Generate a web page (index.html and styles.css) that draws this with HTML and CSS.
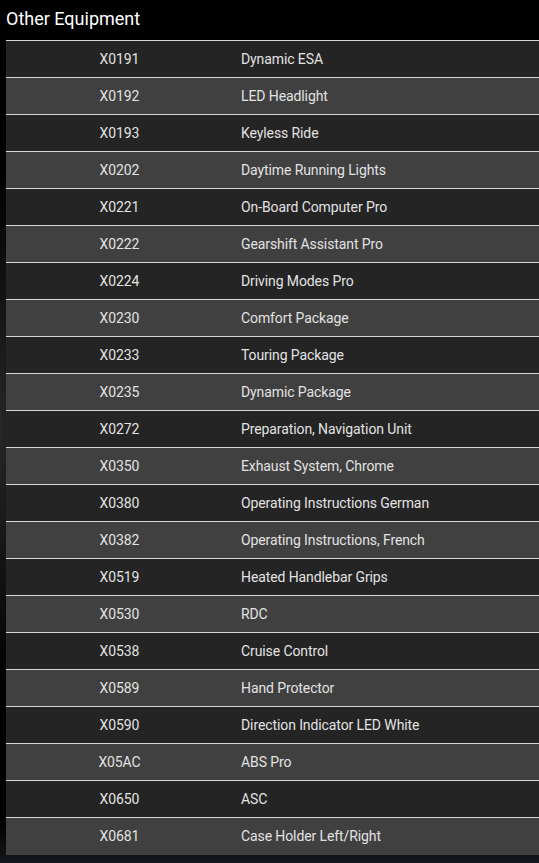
FILE: index.html
```html
<!DOCTYPE html>
<html>
<head>
<meta charset="utf-8">
<link rel="stylesheet" href="styles.css">
</head>
<body>
<div class="page">
  <h2 class="title">Other Equipment</h2>
  <table class="equip">
    <tbody>
      <tr><td class="code">X0191</td><td class="name">Dynamic ESA</td></tr>
      <tr><td class="code">X0192</td><td class="name">LED Headlight</td></tr>
      <tr><td class="code">X0193</td><td class="name">Keyless Ride</td></tr>
      <tr><td class="code">X0202</td><td class="name">Daytime Running Lights</td></tr>
      <tr><td class="code">X0221</td><td class="name">On-Board Computer Pro</td></tr>
      <tr><td class="code">X0222</td><td class="name">Gearshift Assistant Pro</td></tr>
      <tr><td class="code">X0224</td><td class="name">Driving Modes Pro</td></tr>
      <tr><td class="code">X0230</td><td class="name">Comfort Package</td></tr>
      <tr><td class="code">X0233</td><td class="name">Touring Package</td></tr>
      <tr><td class="code">X0235</td><td class="name">Dynamic Package</td></tr>
      <tr><td class="code">X0272</td><td class="name">Preparation, Navigation Unit</td></tr>
      <tr><td class="code">X0350</td><td class="name">Exhaust System, Chrome</td></tr>
      <tr><td class="code">X0380</td><td class="name">Operating Instructions German</td></tr>
      <tr><td class="code">X0382</td><td class="name">Operating Instructions, French</td></tr>
      <tr><td class="code">X0519</td><td class="name">Heated Handlebar Grips</td></tr>
      <tr><td class="code">X0530</td><td class="name">RDC</td></tr>
      <tr><td class="code">X0538</td><td class="name">Cruise Control</td></tr>
      <tr><td class="code">X0589</td><td class="name">Hand Protector</td></tr>
      <tr><td class="code">X0590</td><td class="name">Direction Indicator LED White</td></tr>
      <tr><td class="code">X05AC</td><td class="name">ABS Pro</td></tr>
      <tr><td class="code">X0650</td><td class="name">ASC</td></tr>
      <tr><td class="code">X0681</td><td class="name">Case Holder Left/Right</td></tr>
    </tbody>
  </table>
</div>
</body>
</html>
```
FILE: styles.css
```css
html, body {
  margin: 0;
  padding: 0;
  background: #000;
}
body {
  min-height: 863px;
  background:
    radial-gradient(ellipse 40px 260px at 0px 430px, #262926 0%, rgba(0,0,0,0) 100%),
    linear-gradient(180deg, #000 0%, #000 95%, #15181c 100%);
  font-family: Roboto, "Liberation Sans", sans-serif;
  color: #eee;
}
.page {
  padding-left: 6px;
}
.title {
  margin: 0;
  padding: 8px 0 11px 0;
  font-size: 18px;
  font-weight: 400;
  line-height: 21px;
  color: #fff;
}
.equip {
  width: 533px;
  border-collapse: collapse;
  font-size: 14px;
  letter-spacing: -0.1px;
}
.equip tr {
  height: 37px;
  border-top: 1px solid #d8d8d8;
}
.equip tr:nth-child(odd) {
  background: #242424;
}
.equip tr:nth-child(even) {
  background: #404040;
}
.equip td {
  padding: 0 8px;
  line-height: 16px;
  color: #e2e2e2;
}
.code {
  width: 211px;
  text-align: center;
}
.name {
  text-align: left;
}
```
